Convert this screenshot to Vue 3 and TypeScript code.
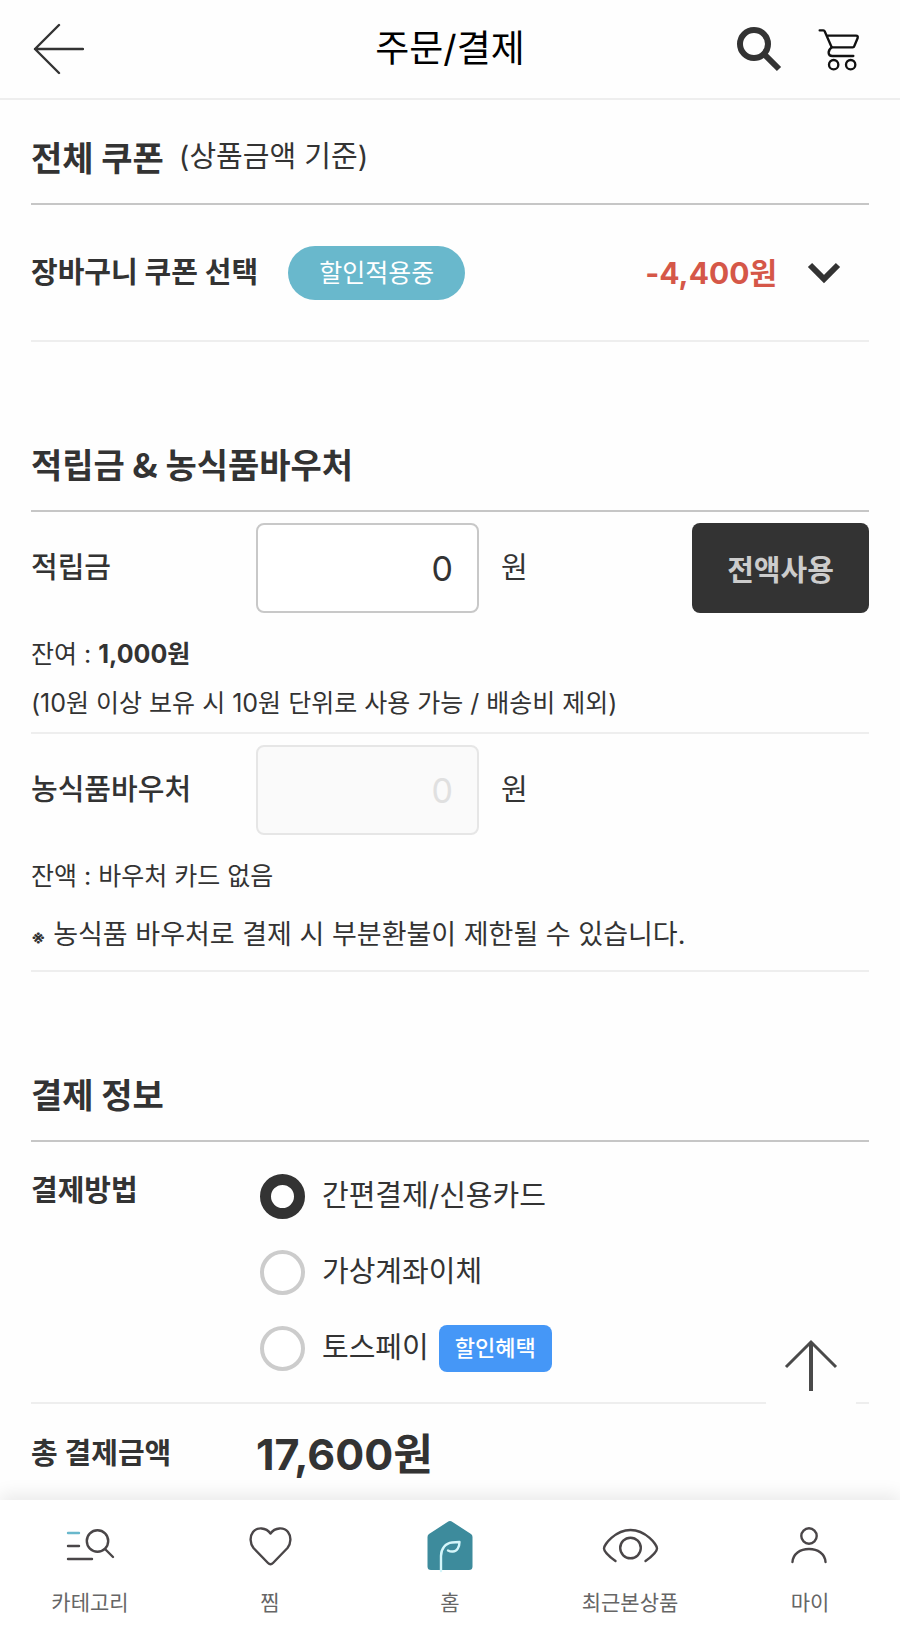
<script setup lang="ts">
import { ref } from 'vue'

type NavIcon = 'category' | 'heart' | 'home' | 'eye' | 'person'

interface NavItem {
  icon: NavIcon
  label: string
}

interface PayMethod {
  id: string
  label: string
  badge?: string
}

const methods: PayMethod[] = [
  { id: 'card', label: '간편결제/신용카드' },
  { id: 'transfer', label: '가상계좌이체' },
  { id: 'toss', label: '토스페이', badge: '할인혜택' },
]

const navItems: NavItem[] = [
  { icon: 'category', label: '카테고리' },
  { icon: 'heart', label: '찜' },
  { icon: 'home', label: '홈' },
  { icon: 'eye', label: '최근본상품' },
  { icon: 'person', label: '마이' },
]

const balance = 1000
const method = ref('card')
const points = ref('0')
const voucher = ref('0')

function useAll(): void {
  points.value = balance.toLocaleString('en-US')
}

function scrollTop(): void {
  window.scrollTo({ top: 0, behavior: 'smooth' })
}
</script>

<template>
  <div class="page">
    <header class="header">
      <button class="icon-button" type="button" aria-label="뒤로">
        <svg width="52" height="54" viewBox="0 0 52 54" class="thin">
          <path d="M51 27H3M27 3L3 27L27 51" />
        </svg>
      </button>
      <h1>주문/결제</h1>
      <div class="actions">
        <button class="icon-button" type="button" aria-label="검색">
          <svg width="48" height="48" viewBox="0 0 48 48" class="search">
            <circle cx="18" cy="19" r="14" />
            <path d="M28 29L43 44" />
          </svg>
        </button>
        <button class="icon-button" type="button" aria-label="장바구니">
          <svg width="42" height="43" viewBox="0 0 126 129" class="cart">
            <path d="M5 7H16Q19 7 20 10L41 58H104Q108 58 109 54L119 30Q121 23 114 23H27" />
            <path d="M41 58C28 68 29 84 43 84H106" />
            <circle cx="47" cy="110" r="14" />
            <circle cx="98" cy="110" r="14" />
          </svg>
        </button>
      </div>
    </header>

    <main class="content">
      <section>
        <div class="section-title">
          <h2>전체 쿠폰</h2>
          <span class="basis">(상품금액 기준)</span>
        </div>
        <div class="coupon">
          <h3>장바구니 쿠폰 선택</h3>
          <span class="pill">할인적용중</span>
          <strong class="discount">-4,400원</strong>
          <button class="icon-button expand" type="button" aria-label="쿠폰 펼치기">
            <svg width="34" height="24" viewBox="0 0 34 24">
              <path d="M3 4L17 18L31 4" />
            </svg>
          </button>
        </div>
      </section>

      <section>
        <div class="section-title">
          <h2>적립금 &amp; 농식품바우처</h2>
        </div>
        <div class="block">
          <div class="field">
            <label for="points">적립금</label>
            <input id="points" v-model="points" type="text" inputmode="numeric" />
            <span class="unit">원</span>
            <button class="use-all" type="button" @click="useAll">전액사용</button>
          </div>
          <p class="note">잔여 : <b>{{ balance.toLocaleString('en-US') }}원</b></p>
          <p class="note">(10원 이상 보유 시 10원 단위로 사용 가능 / 배송비 제외)</p>
        </div>
        <div class="block">
          <div class="field">
            <label for="voucher">농식품바우처</label>
            <input id="voucher" v-model="voucher" type="text" disabled />
            <span class="unit">원</span>
          </div>
          <p class="note">잔액 : 바우처 카드 없음</p>
          <p class="note caution"><span class="mark">※</span> 농식품 바우처로 결제 시 부분환불이 제한될 수 있습니다.</p>
        </div>
      </section>

      <section>
        <div class="section-title">
          <h2>결제 정보</h2>
        </div>
        <div class="payment" role="radiogroup" aria-labelledby="pay-label">
          <h3 id="pay-label">결제방법</h3>
          <div class="methods">
            <label v-for="m in methods" :key="m.id" class="method">
              <input v-model="method" type="radio" name="method" :value="m.id" />
              <span>{{ m.label }}</span>
              <span v-if="m.badge" class="badge">{{ m.badge }}</span>
            </label>
          </div>
        </div>
        <div class="total">
          <h3>총 결제금액</h3>
          <strong>17,600원</strong>
        </div>
      </section>
    </main>

    <button class="to-top" type="button" aria-label="맨 위로" @click="scrollTop">
      <svg width="56" height="56" viewBox="0 0 56 56">
        <path d="M28 4V53" stroke-width="4" />
        <path d="M3 29L28 4L53 29" stroke-width="3" />
      </svg>
    </button>

    <nav class="nav">
      <a v-for="item in navItems" :key="item.icon" href="#">
        <svg width="60" height="56" viewBox="0 0 60 56" class="nav-icon">
          <template v-if="item.icon === 'category'">
            <path class="accent" d="M8 15H19" />
            <path d="M8 28H19M8 41H32" />
            <circle cx="37.5" cy="23" r="10.7" />
            <path d="M45 31L53 39" />
          </template>
          <path
            v-else-if="item.icon === 'heart'"
            d="M30.5 15.5C26 9 17 9 13 14C9.5 18.5 10 25.5 13.5 30L28 45Q30.5 47.500 33 45L47.500 30C51 25.500 51.500 18.500 48 14C44 9 35 9 30.500 15.500Z"
          />
          <template v-else-if="item.icon === 'home'">
            <path
              class="house"
              d="M27.500 4Q30 2.200 32.500 4L51 16Q52.500 17 52.500 19V48.500Q52.500 52 49 52H11Q7.500 52 7.500 48.500V19Q7.500 17 9 16Z"
            />
            <path
              class="leaf"
              d="M21 53V38C21 31 25.500 25 32 24.500L39.500 24C39.500 29 37 33.500 33 33.500Q30.500 33.800 28 32.500"
            />
          </template>
          <template v-else-if="item.icon === 'eye'">
            <path d="M15.500 43C9 38.500 4 33 4 30.500C4 27 15 12 30.500 12S57 27 57 30.500C57 33 52 38.500 45.500 43" />
            <circle cx="30.500" cy="30" r="10.300" />
          </template>
          <template v-else>
            <circle cx="29" cy="18" r="7.700" />
            <path d="M12.500 44C13 36 20 31 29 31S45 36 45.500 44" />
          </template>
        </svg>
        <span>{{ item.label }}</span>
      </a>
    </nav>
  </div>
</template>

<style>
body {
  margin: 0;
  background: #fefefe;
}
</style>

<style scoped>
* {
  box-sizing: border-box;
}

.page {
  display: flex;
  flex-direction: column;
  min-height: 100vh;
  color: #333;
  font-family: Inter, "Noto Sans CJK KR", sans-serif;
  font-size: 29px;
  line-height: 44px;
}

h1,
h2,
h3,
p {
  margin: 0;
}

h2 {
  font-family: "Noto Sans CJK KR", sans-serif;
}

svg {
  display: block;
  fill: none;
  stroke: #333;
}

button {
  padding: 0;
  border: 0;
  background: none;
  font-family: inherit;
  cursor: pointer;
}

.header {
  display: grid;
  grid-template-columns: 1fr auto 1fr;
  align-items: center;
  height: 100px;
  padding: 0 32px;
  border-bottom: 2px solid #eee;
}

.header h1 {
  color: #000;
  font-size: 37px;
  font-weight: 400;
}

.thin {
  stroke-width: 2.4;
  stroke-linecap: round;
  stroke-linejoin: round;
}

.actions {
  display: flex;
  justify-content: flex-end;
  align-items: center;
  gap: 34px;
  padding-right: 8px;
}

.search {
  stroke-width: 6;
}

.cart {
  stroke: #111;
  stroke-width: 7;
  stroke-linecap: round;
  stroke-linejoin: round;
}

.content {
  display: flex;
  flex: 1;
  flex-direction: column;
  gap: 65px;
  padding: 0 31px;
}

.section-title {
  display: flex;
  align-items: center;
  gap: 15px;
  height: 105px;
  padding-top: 11px;
  border-bottom: 2px solid #c6c6c6;
}

h2 {
  font-size: 34px;
  font-weight: 700;
}

h3 {
  font-size: 29px;
  font-weight: 700;
}

.coupon {
  display: flex;
  align-items: center;
  height: 137px;
  border-bottom: 2px solid #eee;
}

.pill {
  margin-left: 30px;
  padding: 0 31px;
  border-radius: 27px;
  background: #69b8cc;
  color: #fff;
  font-size: 25px;
  line-height: 54px;
}

.discount {
  margin-left: auto;
  color: #d55748;
  font-size: 30px;
}

.expand {
  margin: 0 28px 0 30px;
}

.expand svg {
  stroke-width: 6;
}

.block {
  padding: 11px 0 4px;
  border-bottom: 2px solid #eee;
}

.field {
  display: grid;
  grid-template-columns: 225px 223px 1fr auto;
  align-items: center;
  margin-bottom: 17px;
}

.field label {
  font-weight: 500;
}

.field input {
  width: 100%;
  height: 90px;
  padding: 0 24px;
  border: 2px solid #c8c8c8;
  border-radius: 8px;
  background: #fff;
  color: #333;
  font-family: Inter, sans-serif;
  font-size: 34px;
  text-align: right;
}

.field input:disabled {
  border-color: #e6e6e6;
  background: #fafafa;
  color: #e0e0e0;
}

.unit {
  padding-left: 22px;
}

.use-all {
  width: 177px;
  height: 90px;
  border-radius: 8px;
  background: #333;
  color: #ccc;
  font-size: 29px;
  font-weight: 700;
}

.note {
  font-size: 25px;
  line-height: 49px;
}

.caution {
  padding: 9px 0 4px;
  font-size: 27px;
}

.mark {
  font-size: 18px;
  font-weight: 700;
}

.payment {
  display: grid;
  grid-template-columns: 225px 1fr;
  padding: 16px 0;
  border-bottom: 2px solid #eee;
}

.payment h3 {
  padding-top: 11px;
}

.method {
  display: flex;
  align-items: center;
  height: 76px;
}

.method input {
  width: 45px;
  height: 45px;
  margin: 0 17px 0 4px;
  border: 4px solid #ccc;
  border-radius: 50%;
  background: #fff;
  appearance: none;
}

.method input:checked {
  border: 11px solid #333;
}

.badge {
  margin-left: 10px;
  padding: 0 16px;
  border-radius: 8px;
  background: #4597f7;
  color: #fff;
  font-size: 22px;
  font-weight: 500;
  line-height: 47px;
}

.total {
  display: grid;
  grid-template-columns: 225px 1fr;
  align-items: center;
  height: 100px;
}

.total strong {
  font-size: 43px;
}

.to-top {
  position: fixed;
  right: 44px;
  bottom: 218px;
  display: grid;
  place-items: center;
  width: 90px;
  height: 90px;
  border-radius: 8px;
  background: #fefefe;
}

.to-top svg {
  stroke: #4a4a4a;
}

.nav {
  position: sticky;
  bottom: 0;
  display: grid;
  grid-template-columns: repeat(5, 1fr);
  height: 129px;
  margin-top: -4px;
  padding-top: 18px;
  background: #fff;
  box-shadow: 0 -6px 16px rgba(0, 0, 0, 0.08);
}

.nav a {
  display: flex;
  flex-direction: column;
  align-items: center;
  gap: 13px;
  color: #666;
  font-size: 21px;
  line-height: 32px;
  text-decoration: none;
}

.nav-icon {
  stroke: #4a4648;
  stroke-width: 2.4;
  stroke-linecap: round;
  stroke-linejoin: round;
}

.nav-icon .accent {
  stroke: #69b8cc;
}

.nav-icon .house {
  fill: #3d8b9c;
  stroke: none;
}

.nav-icon .leaf {
  stroke: #d5f6fa;
}
</style>
